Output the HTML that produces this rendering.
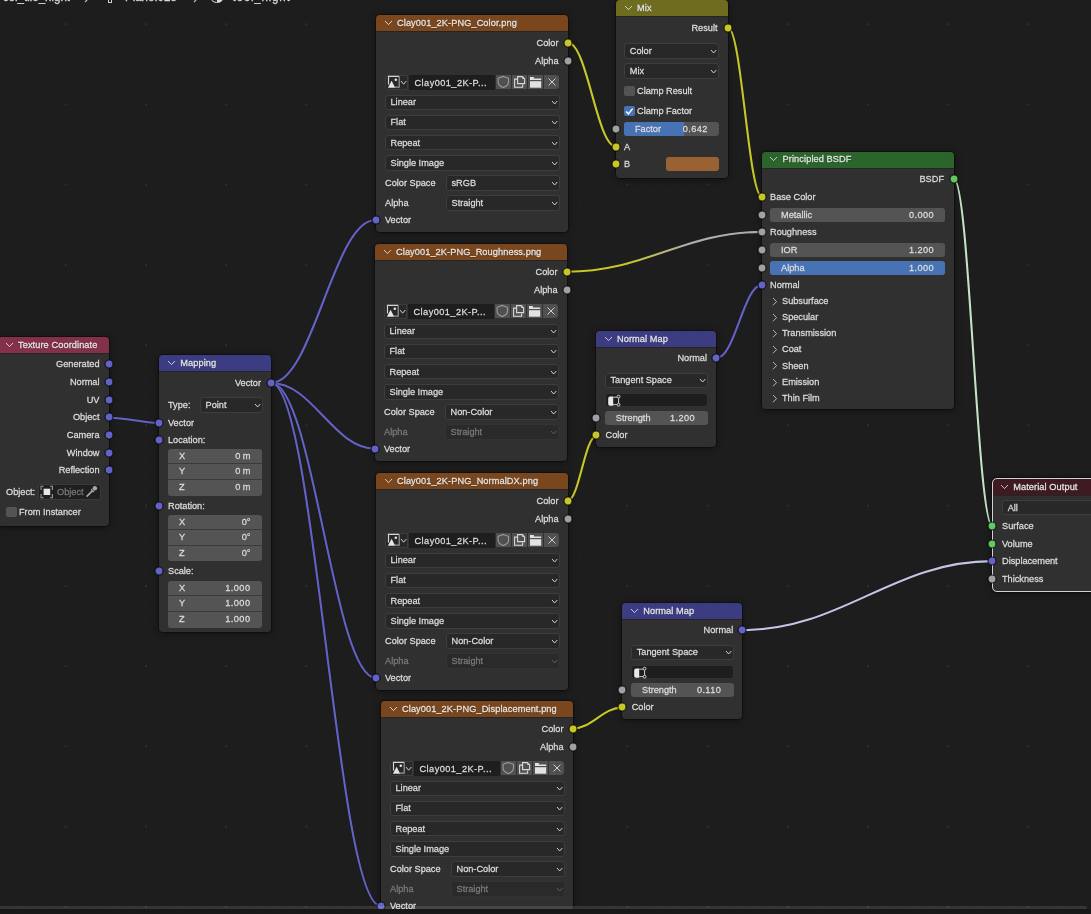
<!DOCTYPE html><html><head><meta charset="utf-8"><style>

*{margin:0;padding:0;box-sizing:border-box}
html,body{width:1091px;height:914px;overflow:hidden;background:#1d1d1d}
body{position:relative;font-family:"Liberation Sans",sans-serif}
#r{position:absolute;left:0;top:0;width:1091px;height:914px;will-change:transform}
#r>div,#r>svg{position:absolute}
.t{white-space:nowrap;font-size:9.2px;-webkit-text-stroke:0.25px currentColor;transform:scaleY(1.07)}
.node{background:#303030;border-radius:4px;overflow:hidden}
.hdr{position:absolute;left:0;top:0;right:0;box-shadow:0 0.8px 0 rgba(0,0,0,0.28)}
.sk{border-radius:50%;box-shadow:0 0 0 0.6px rgba(0,0,0,0.6)}
.dd{border:1px solid #3d3d3d;border-radius:3px}
.sl{border-radius:3px}
.cb{border-radius:2px}
.ic{overflow:visible}

</style></head><body><div id="r">
<svg style="left:0;top:0" width="1091" height="914"><defs><pattern id="gp" patternUnits="userSpaceOnUse" x="1.65" y="8.45" width="16.046" height="16.046"><rect x="-0.5" y="-0.5" width="1" height="1" fill="#2a2a2a"/><rect x="15.546" y="-0.5" width="1" height="1" fill="#2a2a2a"/><rect x="-0.5" y="15.546" width="1" height="1" fill="#2a2a2a"/><rect x="15.546" y="15.546" width="1" height="1" fill="#2a2a2a"/></pattern><pattern id="gp2" patternUnits="userSpaceOnUse" x="65.7" y="24.2" width="80.23" height="80.23"><circle cx="0" cy="0" r="0.9" fill="#333"/><circle cx="80.23" cy="0" r="0.9" fill="#333"/><circle cx="0" cy="80.23" r="0.9" fill="#333"/><circle cx="80.23" cy="80.23" r="0.9" fill="#333"/></pattern></defs><rect width="1091" height="914" fill="url(#gp)"/><rect width="1091" height="914" fill="url(#gp2)"/></svg>

<svg style="left:0;top:0" width="1091" height="914"><path d="M109.2 417.7 C129.24 417.7 139.26 422.8 159.3 422.8" fill="none" stroke="rgba(0,0,0,0.18)" stroke-width="3.1"/><path d="M109.2 417.7 C129.24 417.7 139.26 422.8 159.3 422.8" fill="none" stroke="#6363c7" stroke-width="2.1"/><path d="M271.2 383 C312.84000000000003 383 333.65999999999997 220 375.3 220" fill="none" stroke="rgba(0,0,0,0.18)" stroke-width="3.1"/><path d="M271.2 383 C312.84000000000003 383 333.65999999999997 220 375.3 220" fill="none" stroke="#6363c7" stroke-width="2.1"/><path d="M271.2 383 C312.64 383 333.36 448.6 374.8 448.6" fill="none" stroke="rgba(0,0,0,0.18)" stroke-width="3.1"/><path d="M271.2 383 C312.64 383 333.36 448.6 374.8 448.6" fill="none" stroke="#6363c7" stroke-width="2.1"/><path d="M271.2 383 C312.92 383 333.78 677.8 375.5 677.8" fill="none" stroke="rgba(0,0,0,0.18)" stroke-width="3.1"/><path d="M271.2 383 C312.92 383 333.78 677.8 375.5 677.8" fill="none" stroke="#6363c7" stroke-width="2.1"/><path d="M271.2 383 C314.92 383 336.78 905.8 380.5 905.8" fill="none" stroke="rgba(0,0,0,0.18)" stroke-width="3.1"/><path d="M271.2 383 C314.92 383 336.78 905.8 380.5 905.8" fill="none" stroke="#6363c7" stroke-width="2.1"/><path d="M568 42.8 C587.2 42.8 596.8 146.5 616 146.5" fill="none" stroke="rgba(0,0,0,0.18)" stroke-width="3.1"/><path d="M568 42.8 C587.2 42.8 596.8 146.5 616 146.5" fill="none" stroke="#c7c729" stroke-width="2.1"/><path d="M728 27.7 C741.6 27.7 748.4 196.7 762 196.7" fill="none" stroke="rgba(0,0,0,0.18)" stroke-width="3.1"/><path d="M728 27.7 C741.6 27.7 748.4 196.7 762 196.7" fill="none" stroke="#c7c729" stroke-width="2.1"/><defs><linearGradient id="g1" gradientUnits="userSpaceOnUse" x1="567" y1="271.8" x2="762" y2="231.9"><stop offset="0.3" stop-color="#c7c729"/><stop offset="0.62" stop-color="#acacac"/></linearGradient></defs><path d="M567 271.8 C645.0 271.8 684.0 231.9 762 231.9" fill="none" stroke="rgba(0,0,0,0.18)" stroke-width="3.1"/><path d="M567 271.8 C645.0 271.8 684.0 231.9 762 231.9" fill="none" stroke="url(#g1)" stroke-width="2.1"/><path d="M567.5 500.8 C579.1 500.8 584.9 435.7 596.5 435.7" fill="none" stroke="rgba(0,0,0,0.18)" stroke-width="3.1"/><path d="M567.5 500.8 C579.1 500.8 584.9 435.7 596.5 435.7" fill="none" stroke="#c7c729" stroke-width="2.1"/><path d="M716.5 358.3 C734.7 358.3 743.8 284.9 762 284.9" fill="none" stroke="rgba(0,0,0,0.18)" stroke-width="3.1"/><path d="M716.5 358.3 C734.7 358.3 743.8 284.9 762 284.9" fill="none" stroke="#6363c7" stroke-width="2.1"/><path d="M954 179.2 C969.4 179.2 977.1 526.2 992.5 526.2" fill="none" stroke="rgba(0,0,0,0.18)" stroke-width="3.1"/><path d="M954 179.2 C969.4 179.2 977.1 526.2 992.5 526.2" fill="none" stroke="#c4e2c4" stroke-width="2.1"/><path d="M572.5 728.5 C592.38 728.5 602.32 707.6 622.2 707.6" fill="none" stroke="rgba(0,0,0,0.18)" stroke-width="3.1"/><path d="M572.5 728.5 C592.38 728.5 602.32 707.6 622.2 707.6" fill="none" stroke="#c7c729" stroke-width="2.1"/><path d="M742.2 630.1 C842.32 630.1 892.38 561.1 992.5 561.1" fill="none" stroke="rgba(0,0,0,0.18)" stroke-width="3.1"/><path d="M742.2 630.1 C842.32 630.1 892.38 561.1 992.5 561.1" fill="none" stroke="#c4c4e4" stroke-width="2.1"/></svg>
<div class="t" style="right:1021px;top:-11.2px;line-height:16px;color:#d8d8d8;font-size:11.5px;text-align:right;">col_tile_night</div>
<div style="left:107.5px;top:-3px;width:4px;height:6px;border:1px solid #d0d0d0"></div>
<svg class="ic" style="left:84.0px;top:-7.5px" width="6" height="10"><path d="M1 1 L5 5.0 L1 9" fill="none" stroke="#bbbbbb" stroke-width="1.1"/></svg>
<div class="t" style="left:125px;top:-11.2px;line-height:16px;color:#d8d8d8;font-size:11.5px;">Plane.028</div>
<svg class="ic" style="left:193.0px;top:-7.5px" width="6" height="10"><path d="M1 1 L5 5.0 L1 9" fill="none" stroke="#bbbbbb" stroke-width="1.1"/></svg>
<div style="left:210px;top:-10.5px;width:13.5px;height:13.5px;border-radius:50%;border:1.2px solid #dcdcdc;background:linear-gradient(90deg,#2a2a2a 50%,#dcdcdc 50%)"></div>
<div class="t" style="left:232.5px;top:-11.2px;line-height:16px;color:#d8d8d8;font-size:11.5px;letter-spacing:0.8px">tool_night</div>
<div class="node" style="left:376px;top:15px;width:192px;height:217px;box-shadow:0 0 0 1px rgba(0,0,0,0.3), 0 1px 7px rgba(0,0,0,0.5);"><div class="hdr" style="height:16px;background:#79461d"></div></div>
<svg class="ic" style="left:383.5px;top:20.4px" width="9" height="5.6"><path d="M1 1 L4.5 4.6 L8 1" fill="none" stroke="rgba(255,255,255,0.72)" stroke-width="1.0"/></svg>
<div class="t" style="left:397px;top:15.0px;line-height:16px;color:#e4e4e4;font-size:9.2px;text-shadow:0 1px 1px rgba(0,0,0,0.35);letter-spacing:0.1px;">Clay001_2K-PNG_Color.png</div>
<div class="t" style="right:532.5px;top:34.8px;line-height:16px;color:#dcdcdc;font-size:9.2px;text-align:right;">Color</div>
<svg class="ic" style="left:562px;top:36.8px" width="12" height="12"><circle cx="6" cy="6" r="4.0" fill="#c7c729" stroke="rgba(0,0,0,0.75)" stroke-width="1.2"/></svg>
<div class="t" style="right:532.5px;top:52.9px;line-height:16px;color:#dcdcdc;font-size:9.2px;text-align:right;">Alpha</div>
<svg class="ic" style="left:562px;top:54.9px" width="12" height="12"><circle cx="6" cy="6" r="4.0" fill="#a1a1a1" stroke="rgba(0,0,0,0.75)" stroke-width="1.2"/></svg>
<div class="dd" style="left:385px;top:75px;width:23px;height:15px;background:#282828;border-color:#3d3d3d;border-top-right-radius:0;border-bottom-right-radius:0"></div>
<svg class="ic" style="left:387px;top:75px" width="14" height="14"><path d="M1.5 9.5 V1.4 H12.2" fill="none" stroke="#d6d6d6" stroke-width="1.2"/><path d="M12.2 1.4 V12.2 H8" fill="none" stroke="#9a9a9a" stroke-width="1.2"/><path d="M0.9 12.8 L4.6 5.8 L8.2 12.8 Z" fill="#e6e6e6"/><circle cx="8.8" cy="4.8" r="1.3" fill="#e6e6e6"/></svg>
<svg class="ic" style="left:399.85px;top:80.0px" width="7.3" height="5.2"><path d="M1 1 L3.65 4.2 L6.3 1" fill="none" stroke="#cfcfcf" stroke-width="1.0"/></svg>
<div style="left:409px;top:75px;width:86px;height:15px;background:#1e1e1e"></div>
<div class="t" style="left:414.5px;top:74.5px;line-height:16px;color:#dcdcdc;font-size:9.2px;letter-spacing:0.45px;">Clay001_2K-P...</div>
<div style="left:496px;top:75px;width:15px;height:14.2px;background:#505050;border-radius:0"></div>
<div style="left:512px;top:75px;width:15px;height:14.2px;background:#505050;border-radius:0"></div>
<div style="left:528px;top:75px;width:15px;height:14.2px;background:#505050;border-radius:0"></div>
<div style="left:544px;top:75px;width:15px;height:14.2px;background:#505050;border-radius:0 3px 3px 0"></div>
<svg class="ic" style="left:496px;top:75px" width="16" height="15"><path d="M7.3 1.4 L12.5 3.3 V7 C12.5 9.7 10.1 11.6 7.3 12.6 C4.5 11.6 2.1 9.7 2.1 7 V3.3 Z" fill="none" stroke="#9c9c9c" stroke-width="1.1"/></svg>
<svg class="ic" style="left:512px;top:75px" width="16" height="15"><path d="M5.6 1.6 H10.3 L12.6 3.9 V8.6 H5.6 Z" fill="none" stroke="#dadada" stroke-width="1.1"/><path d="M10.3 1.6 V3.9 H12.6 Z" fill="#dadada"/><path d="M5.0 4.1 H2.6 V12.3 H10.6 V9.6" fill="none" stroke="#dadada" stroke-width="1.1"/></svg>
<svg class="ic" style="left:528px;top:75px" width="16" height="15"><path d="M2 2 H5.8 V3.6 H13.2 V5 H2 Z" fill="#e2e2e2"/><rect x="2" y="6.2" width="11.2" height="6.5" fill="#e2e2e2"/></svg>
<svg class="ic" style="left:548px;top:78.2px" width="8" height="8"><path d="M0.5 0.5 L7.5 7.5 M7.5 0.5 L0.5 7.5" stroke="#d0d0d0" stroke-width="1"/></svg>
<div class="dd" style="left:384.5px;top:94.5px;width:175px;height:15.5px;background:#282828;border-color:#3d3d3d"></div>
<div class="t" style="left:390.5px;top:94.25px;line-height:16px;color:#dcdcdc;font-size:9.2px;">Linear</div>
<svg class="ic" style="left:550.65px;top:100.25px" width="7.3" height="5.0"><path d="M1 1 L3.65 4.0 L6.3 1" fill="none" stroke="#cfcfcf" stroke-width="1.0"/></svg>
<div class="dd" style="left:384.5px;top:114.7px;width:175px;height:15.5px;background:#282828;border-color:#3d3d3d"></div>
<div class="t" style="left:390.5px;top:114.45px;line-height:16px;color:#dcdcdc;font-size:9.2px;">Flat</div>
<svg class="ic" style="left:550.65px;top:120.45px" width="7.3" height="5.0"><path d="M1 1 L3.65 4.0 L6.3 1" fill="none" stroke="#cfcfcf" stroke-width="1.0"/></svg>
<div class="dd" style="left:384.5px;top:134.9px;width:175px;height:15.5px;background:#282828;border-color:#3d3d3d"></div>
<div class="t" style="left:390.5px;top:134.65px;line-height:16px;color:#dcdcdc;font-size:9.2px;">Repeat</div>
<svg class="ic" style="left:550.65px;top:140.65px" width="7.3" height="5.0"><path d="M1 1 L3.65 4.0 L6.3 1" fill="none" stroke="#cfcfcf" stroke-width="1.0"/></svg>
<div class="dd" style="left:384.5px;top:155.1px;width:175px;height:15.5px;background:#282828;border-color:#3d3d3d"></div>
<div class="t" style="left:390.5px;top:154.85px;line-height:16px;color:#dcdcdc;font-size:9.2px;">Single Image</div>
<svg class="ic" style="left:550.65px;top:160.85px" width="7.3" height="5.0"><path d="M1 1 L3.65 4.0 L6.3 1" fill="none" stroke="#cfcfcf" stroke-width="1.0"/></svg>
<div class="t" style="left:385px;top:174.6px;line-height:16px;color:#dcdcdc;font-size:9.2px;">Color Space</div>
<div class="dd" style="left:445.5px;top:175px;width:114.5px;height:15.5px;background:#282828;border-color:#3d3d3d"></div>
<div class="t" style="left:451.5px;top:174.75px;line-height:16px;color:#dcdcdc;font-size:9.2px;">sRGB</div>
<svg class="ic" style="left:551.15px;top:180.75px" width="7.3" height="5.0"><path d="M1 1 L3.65 4.0 L6.3 1" fill="none" stroke="#cfcfcf" stroke-width="1.0"/></svg>
<div class="t" style="left:385px;top:194.8px;line-height:16px;color:#dcdcdc;font-size:9.2px;">Alpha</div>
<div class="dd" style="left:445.5px;top:195.2px;width:114.5px;height:15.5px;background:#282828;border-color:#3d3d3d"></div>
<div class="t" style="left:451.5px;top:194.95px;line-height:16px;color:#dcdcdc;font-size:9.2px;">Straight</div>
<svg class="ic" style="left:551.15px;top:200.95px" width="7.3" height="5.0"><path d="M1 1 L3.65 4.0 L6.3 1" fill="none" stroke="#cfcfcf" stroke-width="1.0"/></svg>
<div class="t" style="left:385px;top:212.0px;line-height:16px;color:#dcdcdc;font-size:9.2px;">Vector</div>
<svg class="ic" style="left:370px;top:214px" width="12" height="12"><circle cx="6" cy="6" r="4.0" fill="#6363c7" stroke="rgba(0,0,0,0.75)" stroke-width="1.2"/></svg>
<div class="node" style="left:375px;top:244px;width:192px;height:216.5px;box-shadow:0 0 0 1px rgba(0,0,0,0.3), 0 1px 7px rgba(0,0,0,0.5);"><div class="hdr" style="height:16px;background:#79461d"></div></div>
<svg class="ic" style="left:382.5px;top:249.39999999999998px" width="9" height="5.6"><path d="M1 1 L4.5 4.6 L8 1" fill="none" stroke="rgba(255,255,255,0.72)" stroke-width="1.0"/></svg>
<div class="t" style="left:396px;top:244.0px;line-height:16px;color:#e4e4e4;font-size:9.2px;text-shadow:0 1px 1px rgba(0,0,0,0.35);letter-spacing:0.1px;">Clay001_2K-PNG_Roughness.png</div>
<div class="t" style="right:533.5px;top:263.8px;line-height:16px;color:#dcdcdc;font-size:9.2px;text-align:right;">Color</div>
<svg class="ic" style="left:561px;top:265.8px" width="12" height="12"><circle cx="6" cy="6" r="4.0" fill="#c7c729" stroke="rgba(0,0,0,0.75)" stroke-width="1.2"/></svg>
<div class="t" style="right:533.5px;top:281.9px;line-height:16px;color:#dcdcdc;font-size:9.2px;text-align:right;">Alpha</div>
<svg class="ic" style="left:561px;top:283.9px" width="12" height="12"><circle cx="6" cy="6" r="4.0" fill="#a1a1a1" stroke="rgba(0,0,0,0.75)" stroke-width="1.2"/></svg>
<div class="dd" style="left:384px;top:304px;width:23px;height:15px;background:#282828;border-color:#3d3d3d;border-top-right-radius:0;border-bottom-right-radius:0"></div>
<svg class="ic" style="left:386px;top:304px" width="14" height="14"><path d="M1.5 9.5 V1.4 H12.2" fill="none" stroke="#d6d6d6" stroke-width="1.2"/><path d="M12.2 1.4 V12.2 H8" fill="none" stroke="#9a9a9a" stroke-width="1.2"/><path d="M0.9 12.8 L4.6 5.8 L8.2 12.8 Z" fill="#e6e6e6"/><circle cx="8.8" cy="4.8" r="1.3" fill="#e6e6e6"/></svg>
<svg class="ic" style="left:398.85px;top:309.0px" width="7.3" height="5.2"><path d="M1 1 L3.65 4.2 L6.3 1" fill="none" stroke="#cfcfcf" stroke-width="1.0"/></svg>
<div style="left:408px;top:304px;width:86px;height:15px;background:#1e1e1e"></div>
<div class="t" style="left:413.5px;top:303.5px;line-height:16px;color:#dcdcdc;font-size:9.2px;letter-spacing:0.45px;">Clay001_2K-P...</div>
<div style="left:495px;top:304px;width:15px;height:14.2px;background:#505050;border-radius:0"></div>
<div style="left:511px;top:304px;width:15px;height:14.2px;background:#505050;border-radius:0"></div>
<div style="left:527px;top:304px;width:15px;height:14.2px;background:#505050;border-radius:0"></div>
<div style="left:543px;top:304px;width:15px;height:14.2px;background:#505050;border-radius:0 3px 3px 0"></div>
<svg class="ic" style="left:495px;top:304px" width="16" height="15"><path d="M7.3 1.4 L12.5 3.3 V7 C12.5 9.7 10.1 11.6 7.3 12.6 C4.5 11.6 2.1 9.7 2.1 7 V3.3 Z" fill="none" stroke="#9c9c9c" stroke-width="1.1"/></svg>
<svg class="ic" style="left:511px;top:304px" width="16" height="15"><path d="M5.6 1.6 H10.3 L12.6 3.9 V8.6 H5.6 Z" fill="none" stroke="#dadada" stroke-width="1.1"/><path d="M10.3 1.6 V3.9 H12.6 Z" fill="#dadada"/><path d="M5.0 4.1 H2.6 V12.3 H10.6 V9.6" fill="none" stroke="#dadada" stroke-width="1.1"/></svg>
<svg class="ic" style="left:527px;top:304px" width="16" height="15"><path d="M2 2 H5.8 V3.6 H13.2 V5 H2 Z" fill="#e2e2e2"/><rect x="2" y="6.2" width="11.2" height="6.5" fill="#e2e2e2"/></svg>
<svg class="ic" style="left:547px;top:307.2px" width="8" height="8"><path d="M0.5 0.5 L7.5 7.5 M7.5 0.5 L0.5 7.5" stroke="#d0d0d0" stroke-width="1"/></svg>
<div class="dd" style="left:383.5px;top:323.5px;width:175px;height:15.5px;background:#282828;border-color:#3d3d3d"></div>
<div class="t" style="left:389.5px;top:323.25px;line-height:16px;color:#dcdcdc;font-size:9.2px;">Linear</div>
<svg class="ic" style="left:549.65px;top:329.25px" width="7.3" height="5.0"><path d="M1 1 L3.65 4.0 L6.3 1" fill="none" stroke="#cfcfcf" stroke-width="1.0"/></svg>
<div class="dd" style="left:383.5px;top:343.7px;width:175px;height:15.5px;background:#282828;border-color:#3d3d3d"></div>
<div class="t" style="left:389.5px;top:343.45px;line-height:16px;color:#dcdcdc;font-size:9.2px;">Flat</div>
<svg class="ic" style="left:549.65px;top:349.45px" width="7.3" height="5.0"><path d="M1 1 L3.65 4.0 L6.3 1" fill="none" stroke="#cfcfcf" stroke-width="1.0"/></svg>
<div class="dd" style="left:383.5px;top:363.9px;width:175px;height:15.5px;background:#282828;border-color:#3d3d3d"></div>
<div class="t" style="left:389.5px;top:363.65px;line-height:16px;color:#dcdcdc;font-size:9.2px;">Repeat</div>
<svg class="ic" style="left:549.65px;top:369.65px" width="7.3" height="5.0"><path d="M1 1 L3.65 4.0 L6.3 1" fill="none" stroke="#cfcfcf" stroke-width="1.0"/></svg>
<div class="dd" style="left:383.5px;top:384.1px;width:175px;height:15.5px;background:#282828;border-color:#3d3d3d"></div>
<div class="t" style="left:389.5px;top:383.85px;line-height:16px;color:#dcdcdc;font-size:9.2px;">Single Image</div>
<svg class="ic" style="left:549.65px;top:389.85px" width="7.3" height="5.0"><path d="M1 1 L3.65 4.0 L6.3 1" fill="none" stroke="#cfcfcf" stroke-width="1.0"/></svg>
<div class="t" style="left:384px;top:403.6px;line-height:16px;color:#dcdcdc;font-size:9.2px;">Color Space</div>
<div class="dd" style="left:444.5px;top:404px;width:114.5px;height:15.5px;background:#282828;border-color:#3d3d3d"></div>
<div class="t" style="left:450.5px;top:403.75px;line-height:16px;color:#dcdcdc;font-size:9.2px;">Non-Color</div>
<svg class="ic" style="left:550.15px;top:409.75px" width="7.3" height="5.0"><path d="M1 1 L3.65 4.0 L6.3 1" fill="none" stroke="#cfcfcf" stroke-width="1.0"/></svg>
<div class="t" style="left:384px;top:423.8px;line-height:16px;color:#7a7a7a;font-size:9.2px;">Alpha</div>
<div class="dd" style="left:444.5px;top:424.2px;width:114.5px;height:15.5px;background:#2a2a2a;border-color:#333333"></div>
<div class="t" style="left:450.5px;top:423.95px;line-height:16px;color:#7a7a7a;font-size:9.2px;">Straight</div>
<svg class="ic" style="left:550.15px;top:429.95px" width="7.3" height="5.0"><path d="M1 1 L3.65 4.0 L6.3 1" fill="none" stroke="#5f5f5f" stroke-width="1.0"/></svg>
<div class="t" style="left:384px;top:441.0px;line-height:16px;color:#dcdcdc;font-size:9.2px;">Vector</div>
<svg class="ic" style="left:369px;top:443px" width="12" height="12"><circle cx="6" cy="6" r="4.0" fill="#6363c7" stroke="rgba(0,0,0,0.75)" stroke-width="1.2"/></svg>
<div class="node" style="left:376px;top:473px;width:192px;height:216.5px;box-shadow:0 0 0 1px rgba(0,0,0,0.3), 0 1px 7px rgba(0,0,0,0.5);"><div class="hdr" style="height:16px;background:#79461d"></div></div>
<svg class="ic" style="left:383.5px;top:478.4px" width="9" height="5.6"><path d="M1 1 L4.5 4.6 L8 1" fill="none" stroke="rgba(255,255,255,0.72)" stroke-width="1.0"/></svg>
<div class="t" style="left:397px;top:473.0px;line-height:16px;color:#e4e4e4;font-size:9.2px;text-shadow:0 1px 1px rgba(0,0,0,0.35);letter-spacing:0.1px;">Clay001_2K-PNG_NormalDX.png</div>
<div class="t" style="right:532.5px;top:492.8px;line-height:16px;color:#dcdcdc;font-size:9.2px;text-align:right;">Color</div>
<svg class="ic" style="left:562px;top:494.8px" width="12" height="12"><circle cx="6" cy="6" r="4.0" fill="#c7c729" stroke="rgba(0,0,0,0.75)" stroke-width="1.2"/></svg>
<div class="t" style="right:532.5px;top:510.9px;line-height:16px;color:#dcdcdc;font-size:9.2px;text-align:right;">Alpha</div>
<svg class="ic" style="left:562px;top:512.9px" width="12" height="12"><circle cx="6" cy="6" r="4.0" fill="#a1a1a1" stroke="rgba(0,0,0,0.75)" stroke-width="1.2"/></svg>
<div class="dd" style="left:385px;top:533px;width:23px;height:15px;background:#282828;border-color:#3d3d3d;border-top-right-radius:0;border-bottom-right-radius:0"></div>
<svg class="ic" style="left:387px;top:533px" width="14" height="14"><path d="M1.5 9.5 V1.4 H12.2" fill="none" stroke="#d6d6d6" stroke-width="1.2"/><path d="M12.2 1.4 V12.2 H8" fill="none" stroke="#9a9a9a" stroke-width="1.2"/><path d="M0.9 12.8 L4.6 5.8 L8.2 12.8 Z" fill="#e6e6e6"/><circle cx="8.8" cy="4.8" r="1.3" fill="#e6e6e6"/></svg>
<svg class="ic" style="left:399.85px;top:538.0px" width="7.3" height="5.2"><path d="M1 1 L3.65 4.2 L6.3 1" fill="none" stroke="#cfcfcf" stroke-width="1.0"/></svg>
<div style="left:409px;top:533px;width:86px;height:15px;background:#1e1e1e"></div>
<div class="t" style="left:414.5px;top:532.5px;line-height:16px;color:#dcdcdc;font-size:9.2px;letter-spacing:0.45px;">Clay001_2K-P...</div>
<div style="left:496px;top:533px;width:15px;height:14.2px;background:#505050;border-radius:0"></div>
<div style="left:512px;top:533px;width:15px;height:14.2px;background:#505050;border-radius:0"></div>
<div style="left:528px;top:533px;width:15px;height:14.2px;background:#505050;border-radius:0"></div>
<div style="left:544px;top:533px;width:15px;height:14.2px;background:#505050;border-radius:0 3px 3px 0"></div>
<svg class="ic" style="left:496px;top:533px" width="16" height="15"><path d="M7.3 1.4 L12.5 3.3 V7 C12.5 9.7 10.1 11.6 7.3 12.6 C4.5 11.6 2.1 9.7 2.1 7 V3.3 Z" fill="none" stroke="#9c9c9c" stroke-width="1.1"/></svg>
<svg class="ic" style="left:512px;top:533px" width="16" height="15"><path d="M5.6 1.6 H10.3 L12.6 3.9 V8.6 H5.6 Z" fill="none" stroke="#dadada" stroke-width="1.1"/><path d="M10.3 1.6 V3.9 H12.6 Z" fill="#dadada"/><path d="M5.0 4.1 H2.6 V12.3 H10.6 V9.6" fill="none" stroke="#dadada" stroke-width="1.1"/></svg>
<svg class="ic" style="left:528px;top:533px" width="16" height="15"><path d="M2 2 H5.8 V3.6 H13.2 V5 H2 Z" fill="#e2e2e2"/><rect x="2" y="6.2" width="11.2" height="6.5" fill="#e2e2e2"/></svg>
<svg class="ic" style="left:548px;top:536.2px" width="8" height="8"><path d="M0.5 0.5 L7.5 7.5 M7.5 0.5 L0.5 7.5" stroke="#d0d0d0" stroke-width="1"/></svg>
<div class="dd" style="left:384.5px;top:552.5px;width:175px;height:15.5px;background:#282828;border-color:#3d3d3d"></div>
<div class="t" style="left:390.5px;top:552.25px;line-height:16px;color:#dcdcdc;font-size:9.2px;">Linear</div>
<svg class="ic" style="left:550.65px;top:558.25px" width="7.3" height="5.0"><path d="M1 1 L3.65 4.0 L6.3 1" fill="none" stroke="#cfcfcf" stroke-width="1.0"/></svg>
<div class="dd" style="left:384.5px;top:572.7px;width:175px;height:15.5px;background:#282828;border-color:#3d3d3d"></div>
<div class="t" style="left:390.5px;top:572.45px;line-height:16px;color:#dcdcdc;font-size:9.2px;">Flat</div>
<svg class="ic" style="left:550.65px;top:578.45px" width="7.3" height="5.0"><path d="M1 1 L3.65 4.0 L6.3 1" fill="none" stroke="#cfcfcf" stroke-width="1.0"/></svg>
<div class="dd" style="left:384.5px;top:592.9px;width:175px;height:15.5px;background:#282828;border-color:#3d3d3d"></div>
<div class="t" style="left:390.5px;top:592.65px;line-height:16px;color:#dcdcdc;font-size:9.2px;">Repeat</div>
<svg class="ic" style="left:550.65px;top:598.65px" width="7.3" height="5.0"><path d="M1 1 L3.65 4.0 L6.3 1" fill="none" stroke="#cfcfcf" stroke-width="1.0"/></svg>
<div class="dd" style="left:384.5px;top:613.1px;width:175px;height:15.5px;background:#282828;border-color:#3d3d3d"></div>
<div class="t" style="left:390.5px;top:612.85px;line-height:16px;color:#dcdcdc;font-size:9.2px;">Single Image</div>
<svg class="ic" style="left:550.65px;top:618.85px" width="7.3" height="5.0"><path d="M1 1 L3.65 4.0 L6.3 1" fill="none" stroke="#cfcfcf" stroke-width="1.0"/></svg>
<div class="t" style="left:385px;top:632.6px;line-height:16px;color:#dcdcdc;font-size:9.2px;">Color Space</div>
<div class="dd" style="left:445.5px;top:633px;width:114.5px;height:15.5px;background:#282828;border-color:#3d3d3d"></div>
<div class="t" style="left:451.5px;top:632.75px;line-height:16px;color:#dcdcdc;font-size:9.2px;">Non-Color</div>
<svg class="ic" style="left:551.15px;top:638.75px" width="7.3" height="5.0"><path d="M1 1 L3.65 4.0 L6.3 1" fill="none" stroke="#cfcfcf" stroke-width="1.0"/></svg>
<div class="t" style="left:385px;top:652.8px;line-height:16px;color:#7a7a7a;font-size:9.2px;">Alpha</div>
<div class="dd" style="left:445.5px;top:653.2px;width:114.5px;height:15.5px;background:#2a2a2a;border-color:#333333"></div>
<div class="t" style="left:451.5px;top:652.95px;line-height:16px;color:#7a7a7a;font-size:9.2px;">Straight</div>
<svg class="ic" style="left:551.15px;top:658.95px" width="7.3" height="5.0"><path d="M1 1 L3.65 4.0 L6.3 1" fill="none" stroke="#5f5f5f" stroke-width="1.0"/></svg>
<div class="t" style="left:385px;top:670.0px;line-height:16px;color:#dcdcdc;font-size:9.2px;">Vector</div>
<svg class="ic" style="left:370px;top:672px" width="12" height="12"><circle cx="6" cy="6" r="4.0" fill="#6363c7" stroke="rgba(0,0,0,0.75)" stroke-width="1.2"/></svg>
<div class="node" style="left:381px;top:701px;width:192px;height:216.5px;box-shadow:0 0 0 1px rgba(0,0,0,0.3), 0 1px 7px rgba(0,0,0,0.5);"><div class="hdr" style="height:16px;background:#79461d"></div></div>
<svg class="ic" style="left:388.5px;top:706.4000000000001px" width="9" height="5.6"><path d="M1 1 L4.5 4.6 L8 1" fill="none" stroke="rgba(255,255,255,0.72)" stroke-width="1.0"/></svg>
<div class="t" style="left:402px;top:701.0px;line-height:16px;color:#e4e4e4;font-size:9.2px;text-shadow:0 1px 1px rgba(0,0,0,0.35);letter-spacing:0.1px;">Clay001_2K-PNG_Displacement.png</div>
<div class="t" style="right:527.5px;top:720.8px;line-height:16px;color:#dcdcdc;font-size:9.2px;text-align:right;">Color</div>
<svg class="ic" style="left:567px;top:722.8px" width="12" height="12"><circle cx="6" cy="6" r="4.0" fill="#c7c729" stroke="rgba(0,0,0,0.75)" stroke-width="1.2"/></svg>
<div class="t" style="right:527.5px;top:738.9px;line-height:16px;color:#dcdcdc;font-size:9.2px;text-align:right;">Alpha</div>
<svg class="ic" style="left:567px;top:740.9px" width="12" height="12"><circle cx="6" cy="6" r="4.0" fill="#a1a1a1" stroke="rgba(0,0,0,0.75)" stroke-width="1.2"/></svg>
<div class="dd" style="left:390px;top:761px;width:23px;height:15px;background:#282828;border-color:#3d3d3d;border-top-right-radius:0;border-bottom-right-radius:0"></div>
<svg class="ic" style="left:392px;top:761px" width="14" height="14"><path d="M1.5 9.5 V1.4 H12.2" fill="none" stroke="#d6d6d6" stroke-width="1.2"/><path d="M12.2 1.4 V12.2 H8" fill="none" stroke="#9a9a9a" stroke-width="1.2"/><path d="M0.9 12.8 L4.6 5.8 L8.2 12.8 Z" fill="#e6e6e6"/><circle cx="8.8" cy="4.8" r="1.3" fill="#e6e6e6"/></svg>
<svg class="ic" style="left:404.85px;top:766.0px" width="7.3" height="5.2"><path d="M1 1 L3.65 4.2 L6.3 1" fill="none" stroke="#cfcfcf" stroke-width="1.0"/></svg>
<div style="left:414px;top:761px;width:86px;height:15px;background:#1e1e1e"></div>
<div class="t" style="left:419.5px;top:760.5px;line-height:16px;color:#dcdcdc;font-size:9.2px;letter-spacing:0.45px;">Clay001_2K-P...</div>
<div style="left:501px;top:761px;width:15px;height:14.2px;background:#505050;border-radius:0"></div>
<div style="left:517px;top:761px;width:15px;height:14.2px;background:#505050;border-radius:0"></div>
<div style="left:533px;top:761px;width:15px;height:14.2px;background:#505050;border-radius:0"></div>
<div style="left:549px;top:761px;width:15px;height:14.2px;background:#505050;border-radius:0 3px 3px 0"></div>
<svg class="ic" style="left:501px;top:761px" width="16" height="15"><path d="M7.3 1.4 L12.5 3.3 V7 C12.5 9.7 10.1 11.6 7.3 12.6 C4.5 11.6 2.1 9.7 2.1 7 V3.3 Z" fill="none" stroke="#9c9c9c" stroke-width="1.1"/></svg>
<svg class="ic" style="left:517px;top:761px" width="16" height="15"><path d="M5.6 1.6 H10.3 L12.6 3.9 V8.6 H5.6 Z" fill="none" stroke="#dadada" stroke-width="1.1"/><path d="M10.3 1.6 V3.9 H12.6 Z" fill="#dadada"/><path d="M5.0 4.1 H2.6 V12.3 H10.6 V9.6" fill="none" stroke="#dadada" stroke-width="1.1"/></svg>
<svg class="ic" style="left:533px;top:761px" width="16" height="15"><path d="M2 2 H5.8 V3.6 H13.2 V5 H2 Z" fill="#e2e2e2"/><rect x="2" y="6.2" width="11.2" height="6.5" fill="#e2e2e2"/></svg>
<svg class="ic" style="left:553px;top:764.2px" width="8" height="8"><path d="M0.5 0.5 L7.5 7.5 M7.5 0.5 L0.5 7.5" stroke="#d0d0d0" stroke-width="1"/></svg>
<div class="dd" style="left:389.5px;top:780.5px;width:175px;height:15.5px;background:#282828;border-color:#3d3d3d"></div>
<div class="t" style="left:395.5px;top:780.25px;line-height:16px;color:#dcdcdc;font-size:9.2px;">Linear</div>
<svg class="ic" style="left:555.65px;top:786.25px" width="7.3" height="5.0"><path d="M1 1 L3.65 4.0 L6.3 1" fill="none" stroke="#cfcfcf" stroke-width="1.0"/></svg>
<div class="dd" style="left:389.5px;top:800.7px;width:175px;height:15.5px;background:#282828;border-color:#3d3d3d"></div>
<div class="t" style="left:395.5px;top:800.45px;line-height:16px;color:#dcdcdc;font-size:9.2px;">Flat</div>
<svg class="ic" style="left:555.65px;top:806.45px" width="7.3" height="5.0"><path d="M1 1 L3.65 4.0 L6.3 1" fill="none" stroke="#cfcfcf" stroke-width="1.0"/></svg>
<div class="dd" style="left:389.5px;top:820.9px;width:175px;height:15.5px;background:#282828;border-color:#3d3d3d"></div>
<div class="t" style="left:395.5px;top:820.65px;line-height:16px;color:#dcdcdc;font-size:9.2px;">Repeat</div>
<svg class="ic" style="left:555.65px;top:826.65px" width="7.3" height="5.0"><path d="M1 1 L3.65 4.0 L6.3 1" fill="none" stroke="#cfcfcf" stroke-width="1.0"/></svg>
<div class="dd" style="left:389.5px;top:841.1px;width:175px;height:15.5px;background:#282828;border-color:#3d3d3d"></div>
<div class="t" style="left:395.5px;top:840.85px;line-height:16px;color:#dcdcdc;font-size:9.2px;">Single Image</div>
<svg class="ic" style="left:555.65px;top:846.85px" width="7.3" height="5.0"><path d="M1 1 L3.65 4.0 L6.3 1" fill="none" stroke="#cfcfcf" stroke-width="1.0"/></svg>
<div class="t" style="left:390px;top:860.6px;line-height:16px;color:#dcdcdc;font-size:9.2px;">Color Space</div>
<div class="dd" style="left:450.5px;top:861px;width:114.5px;height:15.5px;background:#282828;border-color:#3d3d3d"></div>
<div class="t" style="left:456.5px;top:860.75px;line-height:16px;color:#dcdcdc;font-size:9.2px;">Non-Color</div>
<svg class="ic" style="left:556.15px;top:866.75px" width="7.3" height="5.0"><path d="M1 1 L3.65 4.0 L6.3 1" fill="none" stroke="#cfcfcf" stroke-width="1.0"/></svg>
<div class="t" style="left:390px;top:880.8px;line-height:16px;color:#7a7a7a;font-size:9.2px;">Alpha</div>
<div class="dd" style="left:450.5px;top:881.2px;width:114.5px;height:15.5px;background:#2a2a2a;border-color:#333333"></div>
<div class="t" style="left:456.5px;top:880.95px;line-height:16px;color:#7a7a7a;font-size:9.2px;">Straight</div>
<svg class="ic" style="left:556.15px;top:886.95px" width="7.3" height="5.0"><path d="M1 1 L3.65 4.0 L6.3 1" fill="none" stroke="#5f5f5f" stroke-width="1.0"/></svg>
<div class="t" style="left:390px;top:898.0px;line-height:16px;color:#dcdcdc;font-size:9.2px;">Vector</div>
<svg class="ic" style="left:375px;top:900px" width="12" height="12"><circle cx="6" cy="6" r="4.0" fill="#6363c7" stroke="rgba(0,0,0,0.75)" stroke-width="1.2"/></svg>
<div class="node" style="left:616px;top:-0.5px;width:112px;height:178.2px;box-shadow:0 0 0 1px rgba(0,0,0,0.3), 0 1px 7px rgba(0,0,0,0.5);"><div class="hdr" style="height:16px;background:#6d6c1f"></div></div>
<svg class="ic" style="left:623.5px;top:4.9px" width="9" height="5.6"><path d="M1 1 L4.5 4.6 L8 1" fill="none" stroke="rgba(255,255,255,0.72)" stroke-width="1.0"/></svg>
<div class="t" style="left:637px;top:-0.5px;line-height:16px;color:#e4e4e4;font-size:9.2px;text-shadow:0 1px 1px rgba(0,0,0,0.35);letter-spacing:0.1px;">Mix</div>
<div class="t" style="right:373.5px;top:19.7px;line-height:16px;color:#dcdcdc;font-size:9.2px;text-align:right;">Result</div>
<svg class="ic" style="left:722px;top:21.7px" width="12" height="12"><circle cx="6" cy="6" r="4.0" fill="#c7c729" stroke="rgba(0,0,0,0.75)" stroke-width="1.2"/></svg>
<div class="dd" style="left:623.8px;top:43px;width:95.5px;height:15.5px;background:#282828;border-color:#3d3d3d"></div>
<div class="t" style="left:629.8px;top:42.75px;line-height:16px;color:#dcdcdc;font-size:9.2px;">Color</div>
<svg class="ic" style="left:710.4499999999999px;top:48.75px" width="7.3" height="5.0"><path d="M1 1 L3.65 4.0 L6.3 1" fill="none" stroke="#cfcfcf" stroke-width="1.0"/></svg>
<div class="dd" style="left:623.8px;top:63.3px;width:95.5px;height:15.5px;background:#282828;border-color:#3d3d3d"></div>
<div class="t" style="left:629.8px;top:63.05px;line-height:16px;color:#dcdcdc;font-size:9.2px;">Mix</div>
<svg class="ic" style="left:710.4499999999999px;top:69.05px" width="7.3" height="5.0"><path d="M1 1 L3.65 4.0 L6.3 1" fill="none" stroke="#cfcfcf" stroke-width="1.0"/></svg>
<div class="cb" style="left:624px;top:85.6px;width:10.5px;height:10.5px;background:#545454"></div>
<div class="t" style="left:637px;top:82.8px;line-height:16px;color:#dcdcdc;font-size:9.2px;">Clamp Result</div>
<div class="cb" style="left:624px;top:105.6px;width:10.5px;height:10.5px;background:#4772b3"></div>
<svg class="ic" style="left:624px;top:105.6px" width="10.5" height="10.5"><path d="M2.1 5.46 L4.41 7.875 L8.61 2.625" fill="none" stroke="#ffffff" stroke-width="1.5"/></svg>
<div class="t" style="left:637px;top:102.8px;line-height:16px;color:#dcdcdc;font-size:9.2px;">Clamp Factor</div>
<div class="sl" style="left:624px;top:122.2px;width:95.3px;height:14px;background:#545454"></div>
<div class="sl" style="left:624px;top:122.2px;width:59.6578px;height:14px;background:#4772b3;border-top-right-radius:0px;border-bottom-right-radius:0px"></div>
<div class="t" style="left:635px;top:121.19999999999999px;line-height:16px;color:#dcdcdc;font-size:9.2px;">Factor</div>
<div class="t" style="right:383.20000000000005px;top:121.19999999999999px;line-height:16px;color:#dcdcdc;font-size:9.2px;text-align:right;letter-spacing:0.4px;">0.642</div>
<svg class="ic" style="left:610px;top:122.80000000000001px" width="12" height="12"><circle cx="6" cy="6" r="4.0" fill="#a1a1a1" stroke="rgba(0,0,0,0.75)" stroke-width="1.2"/></svg>
<div class="t" style="left:624px;top:138.5px;line-height:16px;color:#dcdcdc;font-size:9.2px;">A</div>
<svg class="ic" style="left:610px;top:140.5px" width="12" height="12"><circle cx="6" cy="6" r="4.0" fill="#c7c729" stroke="rgba(0,0,0,0.75)" stroke-width="1.2"/></svg>
<div class="t" style="left:624px;top:156.2px;line-height:16px;color:#dcdcdc;font-size:9.2px;">B</div>
<svg class="ic" style="left:610px;top:158.2px" width="12" height="12"><circle cx="6" cy="6" r="4.0" fill="#c7c729" stroke="rgba(0,0,0,0.75)" stroke-width="1.2"/></svg>
<div style="left:666px;top:157px;width:53px;height:14px;border-radius:3px;background:#9a6233"></div>
<div class="node" style="left:761.6px;top:152px;width:192px;height:257.3px;box-shadow:0 0 0 1px rgba(0,0,0,0.3), 0 1px 7px rgba(0,0,0,0.5);"><div class="hdr" style="height:16px;background:#2b652b"></div></div>
<svg class="ic" style="left:769.1px;top:155.99999999999997px" width="9" height="5.6"><path d="M1 1 L4.5 4.6 L8 1" fill="none" stroke="rgba(255,255,255,0.72)" stroke-width="1.0"/></svg>
<div class="t" style="left:782.6px;top:150.6px;line-height:16px;color:#e4e4e4;font-size:9.2px;text-shadow:0 1px 1px rgba(0,0,0,0.35);letter-spacing:0.1px;">Principled BSDF</div>
<div class="t" style="right:147px;top:170.9px;line-height:16px;color:#dcdcdc;font-size:9.2px;text-align:right;">BSDF</div>
<svg class="ic" style="left:948px;top:172.9px" width="12" height="12"><circle cx="6" cy="6" r="4.0" fill="#63c763" stroke="rgba(0,0,0,0.75)" stroke-width="1.2"/></svg>
<div class="t" style="left:770px;top:188.7px;line-height:16px;color:#dcdcdc;font-size:9.2px;">Base Color</div>
<svg class="ic" style="left:755.6px;top:190.7px" width="12" height="12"><circle cx="6" cy="6" r="4.0" fill="#c7c729" stroke="rgba(0,0,0,0.75)" stroke-width="1.2"/></svg>
<div class="sl" style="left:770px;top:208px;width:175px;height:14px;background:#545454"></div>
<div class="t" style="left:781px;top:207.0px;line-height:16px;color:#dcdcdc;font-size:9.2px;">Metallic</div>
<div class="t" style="right:157px;top:207.0px;line-height:16px;color:#dcdcdc;font-size:9.2px;text-align:right;letter-spacing:0.4px;">0.000</div>
<svg class="ic" style="left:755.6px;top:208.5px" width="12" height="12"><circle cx="6" cy="6" r="4.0" fill="#a1a1a1" stroke="rgba(0,0,0,0.75)" stroke-width="1.2"/></svg>
<div class="t" style="left:770px;top:223.9px;line-height:16px;color:#dcdcdc;font-size:9.2px;">Roughness</div>
<svg class="ic" style="left:755.6px;top:225.9px" width="12" height="12"><circle cx="6" cy="6" r="4.0" fill="#a1a1a1" stroke="rgba(0,0,0,0.75)" stroke-width="1.2"/></svg>
<div class="sl" style="left:770px;top:242.6px;width:175px;height:14.2px;background:#545454"></div>
<div class="t" style="left:781px;top:241.7px;line-height:16px;color:#dcdcdc;font-size:9.2px;">IOR</div>
<div class="t" style="right:157px;top:241.7px;line-height:16px;color:#dcdcdc;font-size:9.2px;text-align:right;letter-spacing:0.4px;">1.200</div>
<svg class="ic" style="left:755.6px;top:243.7px" width="12" height="12"><circle cx="6" cy="6" r="4.0" fill="#a1a1a1" stroke="rgba(0,0,0,0.75)" stroke-width="1.2"/></svg>
<div class="sl" style="left:770px;top:261px;width:175px;height:14px;background:#545454"></div>
<div class="sl" style="left:770px;top:261px;width:175.0px;height:14px;background:#4772b3;border-top-right-radius:3px;border-bottom-right-radius:3px"></div>
<div class="t" style="left:781px;top:260.0px;line-height:16px;color:#dcdcdc;font-size:9.2px;">Alpha</div>
<div class="t" style="right:157px;top:260.0px;line-height:16px;color:#dcdcdc;font-size:9.2px;text-align:right;letter-spacing:0.4px;">1.000</div>
<svg class="ic" style="left:755.6px;top:261.5px" width="12" height="12"><circle cx="6" cy="6" r="4.0" fill="#a1a1a1" stroke="rgba(0,0,0,0.75)" stroke-width="1.2"/></svg>
<div class="t" style="left:770px;top:276.9px;line-height:16px;color:#dcdcdc;font-size:9.2px;">Normal</div>
<svg class="ic" style="left:755.6px;top:278.9px" width="12" height="12"><circle cx="6" cy="6" r="4.0" fill="#6363c7" stroke="rgba(0,0,0,0.75)" stroke-width="1.2"/></svg>
<svg class="ic" style="left:772.4000000000001px;top:296.59999999999997px" width="5.6" height="9.2"><path d="M1 1 L4.6 4.6 L1 8.2" fill="none" stroke="#b8b8b8" stroke-width="1.0"/></svg>
<div class="t" style="left:782px;top:292.9px;line-height:16px;color:#dcdcdc;font-size:9.2px;">Subsurface</div>
<svg class="ic" style="left:772.4000000000001px;top:312.78px" width="5.6" height="9.2"><path d="M1 1 L4.6 4.6 L1 8.2" fill="none" stroke="#b8b8b8" stroke-width="1.0"/></svg>
<div class="t" style="left:782px;top:309.08px;line-height:16px;color:#dcdcdc;font-size:9.2px;">Specular</div>
<svg class="ic" style="left:772.4000000000001px;top:328.96px" width="5.6" height="9.2"><path d="M1 1 L4.6 4.6 L1 8.2" fill="none" stroke="#b8b8b8" stroke-width="1.0"/></svg>
<div class="t" style="left:782px;top:325.26px;line-height:16px;color:#dcdcdc;font-size:9.2px;">Transmission</div>
<svg class="ic" style="left:772.4000000000001px;top:345.14px" width="5.6" height="9.2"><path d="M1 1 L4.6 4.6 L1 8.2" fill="none" stroke="#b8b8b8" stroke-width="1.0"/></svg>
<div class="t" style="left:782px;top:341.44px;line-height:16px;color:#dcdcdc;font-size:9.2px;">Coat</div>
<svg class="ic" style="left:772.4000000000001px;top:361.32px" width="5.6" height="9.2"><path d="M1 1 L4.6 4.6 L1 8.2" fill="none" stroke="#b8b8b8" stroke-width="1.0"/></svg>
<div class="t" style="left:782px;top:357.62px;line-height:16px;color:#dcdcdc;font-size:9.2px;">Sheen</div>
<svg class="ic" style="left:772.4000000000001px;top:377.49999999999994px" width="5.6" height="9.2"><path d="M1 1 L4.6 4.6 L1 8.2" fill="none" stroke="#b8b8b8" stroke-width="1.0"/></svg>
<div class="t" style="left:782px;top:373.79999999999995px;line-height:16px;color:#dcdcdc;font-size:9.2px;">Emission</div>
<svg class="ic" style="left:772.4000000000001px;top:393.67999999999995px" width="5.6" height="9.2"><path d="M1 1 L4.6 4.6 L1 8.2" fill="none" stroke="#b8b8b8" stroke-width="1.0"/></svg>
<div class="t" style="left:782px;top:389.97999999999996px;line-height:16px;color:#dcdcdc;font-size:9.2px;">Thin Film</div>
<div class="node" style="left:596px;top:330.5px;width:120px;height:116.5px;box-shadow:0 0 0 1px rgba(0,0,0,0.3), 0 1px 7px rgba(0,0,0,0.5);"><div class="hdr" style="height:16px;background:#3c3c83"></div></div>
<svg class="ic" style="left:603.5px;top:335.9px" width="9" height="5.6"><path d="M1 1 L4.5 4.6 L8 1" fill="none" stroke="rgba(255,255,255,0.72)" stroke-width="1.0"/></svg>
<div class="t" style="left:617px;top:330.5px;line-height:16px;color:#e4e4e4;font-size:9.2px;text-shadow:0 1px 1px rgba(0,0,0,0.35);letter-spacing:0.1px;">Normal Map</div>
<div class="t" style="right:384px;top:350.1px;line-height:16px;color:#dcdcdc;font-size:9.2px;text-align:right;">Normal</div>
<svg class="ic" style="left:710px;top:352.1px" width="12" height="12"><circle cx="6" cy="6" r="4.0" fill="#6363c7" stroke="rgba(0,0,0,0.75)" stroke-width="1.2"/></svg>
<div class="dd" style="left:604.5px;top:372.5px;width:103px;height:15px;background:#282828;border-color:#3d3d3d"></div>
<div class="t" style="left:610.5px;top:372.0px;line-height:16px;color:#dcdcdc;font-size:9.2px;">Tangent Space</div>
<svg class="ic" style="left:698.65px;top:378.0px" width="7.3" height="5.0"><path d="M1 1 L3.65 4.0 L6.3 1" fill="none" stroke="#cfcfcf" stroke-width="1.0"/></svg>
<div class="dd" style="left:604.5px;top:392.5px;width:103px;height:14.5px;background:#1e1e1e;border-color:#333"></div>
<svg class="ic" style="left:607px;top:393.0px" width="14" height="14"><path d="M3 3.6 H6.2 V12.8 H3 Q1.2 12.8 1.2 11 V5.4 Q1.2 3.6 3 3.6 Z" fill="#e8e8e8"/><path d="M6.2 4.2 H10.2 M6.2 11.6 H10.2 M11.6 5 V10.3" stroke="#e0e0e0" stroke-width="0.9" fill="none"/><circle cx="11.6" cy="3.6" r="1.4" fill="none" stroke="#e0e0e0" stroke-width="0.9"/><circle cx="11.6" cy="11.7" r="1.4" fill="none" stroke="#e0e0e0" stroke-width="0.9"/></svg>
<div class="sl" style="left:604.5px;top:410.7px;width:103px;height:14.6px;background:#545454"></div>
<div class="t" style="left:615.8px;top:410.0px;line-height:16px;color:#dcdcdc;font-size:9.2px;">Strength</div>
<div class="t" style="right:396.0px;top:410.0px;line-height:16px;color:#dcdcdc;font-size:9.2px;text-align:right;letter-spacing:0.4px;">1.200</div>
<svg class="ic" style="left:590px;top:411.8px" width="12" height="12"><circle cx="6" cy="6" r="4.0" fill="#a1a1a1" stroke="rgba(0,0,0,0.75)" stroke-width="1.2"/></svg>
<div class="t" style="left:605.5px;top:426.5px;line-height:16px;color:#dcdcdc;font-size:9.2px;">Color</div>
<svg class="ic" style="left:590px;top:428.5px" width="12" height="12"><circle cx="6" cy="6" r="4.0" fill="#c7c729" stroke="rgba(0,0,0,0.75)" stroke-width="1.2"/></svg>
<div class="node" style="left:622.2px;top:602.6px;width:120px;height:116.5px;box-shadow:0 0 0 1px rgba(0,0,0,0.3), 0 1px 7px rgba(0,0,0,0.5);"><div class="hdr" style="height:16px;background:#3c3c83"></div></div>
<svg class="ic" style="left:629.7px;top:608.0000000000001px" width="9" height="5.6"><path d="M1 1 L4.5 4.6 L8 1" fill="none" stroke="rgba(255,255,255,0.72)" stroke-width="1.0"/></svg>
<div class="t" style="left:643.2px;top:602.6px;line-height:16px;color:#e4e4e4;font-size:9.2px;text-shadow:0 1px 1px rgba(0,0,0,0.35);letter-spacing:0.1px;">Normal Map</div>
<div class="t" style="right:357.79999999999995px;top:622.2px;line-height:16px;color:#dcdcdc;font-size:9.2px;text-align:right;">Normal</div>
<svg class="ic" style="left:736.2px;top:624.2px" width="12" height="12"><circle cx="6" cy="6" r="4.0" fill="#6363c7" stroke="rgba(0,0,0,0.75)" stroke-width="1.2"/></svg>
<div class="dd" style="left:630.7px;top:644.6px;width:103px;height:15px;background:#282828;border-color:#3d3d3d"></div>
<div class="t" style="left:636.7px;top:644.1px;line-height:16px;color:#dcdcdc;font-size:9.2px;">Tangent Space</div>
<svg class="ic" style="left:724.85px;top:650.1px" width="7.3" height="5.0"><path d="M1 1 L3.65 4.0 L6.3 1" fill="none" stroke="#cfcfcf" stroke-width="1.0"/></svg>
<div class="dd" style="left:630.7px;top:664.6px;width:103px;height:14.5px;background:#1e1e1e;border-color:#333"></div>
<svg class="ic" style="left:633.2px;top:665.1px" width="14" height="14"><path d="M3 3.6 H6.2 V12.8 H3 Q1.2 12.8 1.2 11 V5.4 Q1.2 3.6 3 3.6 Z" fill="#e8e8e8"/><path d="M6.2 4.2 H10.2 M6.2 11.6 H10.2 M11.6 5 V10.3" stroke="#e0e0e0" stroke-width="0.9" fill="none"/><circle cx="11.6" cy="3.6" r="1.4" fill="none" stroke="#e0e0e0" stroke-width="0.9"/><circle cx="11.6" cy="11.7" r="1.4" fill="none" stroke="#e0e0e0" stroke-width="0.9"/></svg>
<div class="sl" style="left:630.7px;top:682.8000000000001px;width:103px;height:14.6px;background:#545454"></div>
<div class="t" style="left:642.0px;top:682.1px;line-height:16px;color:#dcdcdc;font-size:9.2px;">Strength</div>
<div class="t" style="right:369.79999999999995px;top:682.1px;line-height:16px;color:#dcdcdc;font-size:9.2px;text-align:right;letter-spacing:0.4px;">0.110</div>
<svg class="ic" style="left:616.2px;top:683.9px" width="12" height="12"><circle cx="6" cy="6" r="4.0" fill="#a1a1a1" stroke="rgba(0,0,0,0.75)" stroke-width="1.2"/></svg>
<div class="t" style="left:631.7px;top:698.6px;line-height:16px;color:#dcdcdc;font-size:9.2px;">Color</div>
<svg class="ic" style="left:616.2px;top:700.6px" width="12" height="12"><circle cx="6" cy="6" r="4.0" fill="#c7c729" stroke="rgba(0,0,0,0.75)" stroke-width="1.2"/></svg>
<div class="node" style="left:-3px;top:337px;width:112px;height:188.5px;box-shadow:0 0 0 1px rgba(0,0,0,0.3), 0 1px 7px rgba(0,0,0,0.5);"><div class="hdr" style="height:16px;background:#83314a"></div></div>
<svg class="ic" style="left:4.5px;top:342.4px" width="9" height="5.6"><path d="M1 1 L4.5 4.6 L8 1" fill="none" stroke="rgba(255,255,255,0.72)" stroke-width="1.0"/></svg>
<div class="t" style="left:18px;top:337.0px;line-height:16px;color:#e4e4e4;font-size:9.2px;text-shadow:0 1px 1px rgba(0,0,0,0.35);letter-spacing:0.1px;">Texture Coordinate</div>
<div class="t" style="right:991.5px;top:356.4px;line-height:16px;color:#dcdcdc;font-size:9.2px;text-align:right;">Generated</div>
<svg class="ic" style="left:103.2px;top:358.4px" width="12" height="12"><circle cx="6" cy="6" r="4.0" fill="#6363c7" stroke="rgba(0,0,0,0.75)" stroke-width="1.2"/></svg>
<div class="t" style="right:991.5px;top:374.08px;line-height:16px;color:#dcdcdc;font-size:9.2px;text-align:right;">Normal</div>
<svg class="ic" style="left:103.2px;top:376.08px" width="12" height="12"><circle cx="6" cy="6" r="4.0" fill="#6363c7" stroke="rgba(0,0,0,0.75)" stroke-width="1.2"/></svg>
<div class="t" style="right:991.5px;top:391.76px;line-height:16px;color:#dcdcdc;font-size:9.2px;text-align:right;">UV</div>
<svg class="ic" style="left:103.2px;top:393.76px" width="12" height="12"><circle cx="6" cy="6" r="4.0" fill="#6363c7" stroke="rgba(0,0,0,0.75)" stroke-width="1.2"/></svg>
<div class="t" style="right:991.5px;top:409.44px;line-height:16px;color:#dcdcdc;font-size:9.2px;text-align:right;">Object</div>
<svg class="ic" style="left:103.2px;top:411.44px" width="12" height="12"><circle cx="6" cy="6" r="4.0" fill="#6363c7" stroke="rgba(0,0,0,0.75)" stroke-width="1.2"/></svg>
<div class="t" style="right:991.5px;top:427.12px;line-height:16px;color:#dcdcdc;font-size:9.2px;text-align:right;">Camera</div>
<svg class="ic" style="left:103.2px;top:429.12px" width="12" height="12"><circle cx="6" cy="6" r="4.0" fill="#6363c7" stroke="rgba(0,0,0,0.75)" stroke-width="1.2"/></svg>
<div class="t" style="right:991.5px;top:444.79999999999995px;line-height:16px;color:#dcdcdc;font-size:9.2px;text-align:right;">Window</div>
<svg class="ic" style="left:103.2px;top:446.79999999999995px" width="12" height="12"><circle cx="6" cy="6" r="4.0" fill="#6363c7" stroke="rgba(0,0,0,0.75)" stroke-width="1.2"/></svg>
<div class="t" style="right:991.5px;top:462.47999999999996px;line-height:16px;color:#dcdcdc;font-size:9.2px;text-align:right;">Reflection</div>
<svg class="ic" style="left:103.2px;top:464.47999999999996px" width="12" height="12"><circle cx="6" cy="6" r="4.0" fill="#6363c7" stroke="rgba(0,0,0,0.75)" stroke-width="1.2"/></svg>
<div class="t" style="left:6px;top:483.8px;line-height:16px;color:#dcdcdc;font-size:9.2px;">Object:</div>
<div class="dd" style="left:37.8px;top:484.2px;width:62.8px;height:15.4px;background:#1f1f1f;border-color:#3a3a3a"></div>
<svg class="ic" style="left:40px;top:485px" width="14" height="14"><path d="M1.1 5 V1.3 H3.6 M10 1.3 H12.4 V5 M12.4 9 V12.7 H10 M3.6 12.7 H1.1 V9" fill="none" stroke="#9a9a9a" stroke-width="1.1"/><rect x="3.6" y="3.7" width="6.6" height="6.3" fill="#e6e6e6"/></svg>
<div class="t" style="left:57px;top:483.8px;line-height:16px;color:#777777;font-size:9.2px;">Object</div>
<svg class="ic" style="left:85px;top:485px" width="13" height="13"><path d="M1.6 11.6 L7.6 5.6" stroke="#a8a8a8" stroke-width="1.7"/><circle cx="9.9" cy="3.3" r="2.2" fill="#a8a8a8"/><path d="M6.2 4.3 L8.9 7" stroke="#a8a8a8" stroke-width="1.3"/></svg>
<div class="cb" style="left:6px;top:506.6px;width:10.5px;height:10.5px;background:#545454"></div>
<div class="t" style="left:19px;top:503.8px;line-height:16px;color:#dcdcdc;font-size:9.2px;">From Instancer</div>
<div class="node" style="left:159.3px;top:355px;width:111.5px;height:276.5px;box-shadow:0 0 0 1px rgba(0,0,0,0.3), 0 1px 7px rgba(0,0,0,0.5);"><div class="hdr" style="height:16px;background:#3c3c83"></div></div>
<svg class="ic" style="left:166.8px;top:360.4px" width="9" height="5.6"><path d="M1 1 L4.5 4.6 L8 1" fill="none" stroke="rgba(255,255,255,0.72)" stroke-width="1.0"/></svg>
<div class="t" style="left:180.3px;top:355.0px;line-height:16px;color:#e4e4e4;font-size:9.2px;text-shadow:0 1px 1px rgba(0,0,0,0.35);letter-spacing:0.1px;">Mapping</div>
<div class="t" style="right:830px;top:375.0px;line-height:16px;color:#dcdcdc;font-size:9.2px;text-align:right;">Vector</div>
<svg class="ic" style="left:265.2px;top:377px" width="12" height="12"><circle cx="6" cy="6" r="4.0" fill="#6363c7" stroke="rgba(0,0,0,0.75)" stroke-width="1.2"/></svg>
<div class="t" style="left:168px;top:397.0px;line-height:16px;color:#dcdcdc;font-size:9.2px;">Type:</div>
<div class="dd" style="left:199.6px;top:397.2px;width:63px;height:15.4px;background:#282828;border-color:#3d3d3d"></div>
<div class="t" style="left:205.6px;top:396.9px;line-height:16px;color:#dcdcdc;font-size:9.2px;">Point</div>
<svg class="ic" style="left:253.75000000000003px;top:402.9px" width="7.3" height="5.0"><path d="M1 1 L3.65 4.0 L6.3 1" fill="none" stroke="#cfcfcf" stroke-width="1.0"/></svg>
<div class="t" style="left:168px;top:414.8px;line-height:16px;color:#dcdcdc;font-size:9.2px;">Vector</div>
<svg class="ic" style="left:153.3px;top:416.8px" width="12" height="12"><circle cx="6" cy="6" r="4.0" fill="#6363c7" stroke="rgba(0,0,0,0.75)" stroke-width="1.2"/></svg>
<div class="t" style="left:168px;top:431.9px;line-height:16px;color:#dcdcdc;font-size:9.2px;">Location:</div>
<svg class="ic" style="left:153.3px;top:433.9px" width="12" height="12"><circle cx="6" cy="6" r="4.0" fill="#6363c7" stroke="rgba(0,0,0,0.75)" stroke-width="1.2"/></svg>
<div class="sl" style="left:167.7px;top:448.8px;width:94.7px;height:46.9px;background:#545454"></div>
<div style="left:167.7px;top:463.3px;width:94.7px;height:1px;background:#3a3a3a"></div>
<div style="left:167.7px;top:479.1px;width:94.7px;height:1px;background:#3a3a3a"></div>
<div class="t" style="left:179px;top:447.7px;line-height:16px;color:#dcdcdc;font-size:9.2px;">X</div>
<div class="t" style="right:840.5px;top:447.7px;line-height:16px;color:#dcdcdc;font-size:9.2px;text-align:right;">0 m</div>
<div class="t" style="left:179px;top:463.34999999999997px;line-height:16px;color:#dcdcdc;font-size:9.2px;">Y</div>
<div class="t" style="right:840.5px;top:463.34999999999997px;line-height:16px;color:#dcdcdc;font-size:9.2px;text-align:right;">0 m</div>
<div class="t" style="left:179px;top:479.0px;line-height:16px;color:#dcdcdc;font-size:9.2px;">Z</div>
<div class="t" style="right:840.5px;top:479.0px;line-height:16px;color:#dcdcdc;font-size:9.2px;text-align:right;">0 m</div>
<div class="t" style="left:168px;top:497.5px;line-height:16px;color:#dcdcdc;font-size:9.2px;">Rotation:</div>
<svg class="ic" style="left:153.3px;top:499.5px" width="12" height="12"><circle cx="6" cy="6" r="4.0" fill="#6363c7" stroke="rgba(0,0,0,0.75)" stroke-width="1.2"/></svg>
<div class="sl" style="left:167.7px;top:514.6px;width:94.7px;height:46.9px;background:#545454"></div>
<div style="left:167.7px;top:529.1px;width:94.7px;height:1px;background:#3a3a3a"></div>
<div style="left:167.7px;top:544.9000000000001px;width:94.7px;height:1px;background:#3a3a3a"></div>
<div class="t" style="left:179px;top:513.5px;line-height:16px;color:#dcdcdc;font-size:9.2px;">X</div>
<div class="t" style="right:840.5px;top:513.5px;line-height:16px;color:#dcdcdc;font-size:9.2px;text-align:right;">0°</div>
<div class="t" style="left:179px;top:529.15px;line-height:16px;color:#dcdcdc;font-size:9.2px;">Y</div>
<div class="t" style="right:840.5px;top:529.15px;line-height:16px;color:#dcdcdc;font-size:9.2px;text-align:right;">0°</div>
<div class="t" style="left:179px;top:544.8px;line-height:16px;color:#dcdcdc;font-size:9.2px;">Z</div>
<div class="t" style="right:840.5px;top:544.8px;line-height:16px;color:#dcdcdc;font-size:9.2px;text-align:right;">0°</div>
<div class="t" style="left:168px;top:563.3px;line-height:16px;color:#dcdcdc;font-size:9.2px;">Scale:</div>
<svg class="ic" style="left:153.3px;top:565.3px" width="12" height="12"><circle cx="6" cy="6" r="4.0" fill="#6363c7" stroke="rgba(0,0,0,0.75)" stroke-width="1.2"/></svg>
<div class="sl" style="left:167.7px;top:580.8px;width:94.7px;height:46.9px;background:#545454"></div>
<div style="left:167.7px;top:595.3px;width:94.7px;height:1px;background:#3a3a3a"></div>
<div style="left:167.7px;top:611.1px;width:94.7px;height:1px;background:#3a3a3a"></div>
<div class="t" style="left:179px;top:579.6999999999999px;line-height:16px;color:#dcdcdc;font-size:9.2px;">X</div>
<div class="t" style="right:840.5px;top:579.6999999999999px;line-height:16px;color:#dcdcdc;font-size:9.2px;text-align:right;letter-spacing:0.45px;">1.000</div>
<div class="t" style="left:179px;top:595.3499999999999px;line-height:16px;color:#dcdcdc;font-size:9.2px;">Y</div>
<div class="t" style="right:840.5px;top:595.3499999999999px;line-height:16px;color:#dcdcdc;font-size:9.2px;text-align:right;letter-spacing:0.45px;">1.000</div>
<div class="t" style="left:179px;top:610.9999999999999px;line-height:16px;color:#dcdcdc;font-size:9.2px;">Z</div>
<div class="t" style="right:840.5px;top:610.9999999999999px;line-height:16px;color:#dcdcdc;font-size:9.2px;text-align:right;letter-spacing:0.45px;">1.000</div>
<div class="node" style="left:992.2px;top:478.2px;width:110px;height:113.8px;box-shadow:0 0 0 1px rgba(0,0,0,0.3), 0 1px 7px rgba(0,0,0,0.5);"><div class="hdr" style="height:17px;background:#3f1b21"></div></div>
<div style="left:992.2px;top:478.2px;width:110px;height:113.8px;border:1.3px solid #d2d2d2;border-radius:5px"></div>
<svg class="ic" style="left:999.7px;top:484.09999999999997px" width="9" height="5.6"><path d="M1 1 L4.5 4.6 L8 1" fill="none" stroke="rgba(255,255,255,0.72)" stroke-width="1.0"/></svg>
<div class="t" style="left:1013.2px;top:478.7px;line-height:16px;color:#e4e4e4;font-size:9.2px;text-shadow:0 1px 1px rgba(0,0,0,0.35);letter-spacing:0.1px;">Material Output</div>
<div class="dd" style="left:1001.7px;top:500.1px;width:100px;height:15px;background:#282828;border-color:#3d3d3d"></div>
<div class="t" style="left:1007.7px;top:499.6px;line-height:16px;color:#dcdcdc;font-size:9.2px;">All</div>
<div class="t" style="left:1002px;top:518.2px;line-height:16px;color:#dcdcdc;font-size:9.2px;">Surface</div>
<svg class="ic" style="left:986.2px;top:520.2px" width="12" height="12"><circle cx="6" cy="6" r="4.0" fill="#63c763" stroke="rgba(0,0,0,0.75)" stroke-width="1.2"/></svg>
<div class="t" style="left:1002px;top:535.8px;line-height:16px;color:#dcdcdc;font-size:9.2px;">Volume</div>
<svg class="ic" style="left:986.2px;top:537.8px" width="12" height="12"><circle cx="6" cy="6" r="4.0" fill="#63c763" stroke="rgba(0,0,0,0.75)" stroke-width="1.2"/></svg>
<div class="t" style="left:1002px;top:553.1px;line-height:16px;color:#dcdcdc;font-size:9.2px;">Displacement</div>
<svg class="ic" style="left:986.2px;top:555.1px" width="12" height="12"><circle cx="6" cy="6" r="4.0" fill="#6363c7" stroke="rgba(0,0,0,0.75)" stroke-width="1.2"/></svg>
<div class="t" style="left:1002px;top:570.7px;line-height:16px;color:#dcdcdc;font-size:9.2px;">Thickness</div>
<svg class="ic" style="left:986.2px;top:572.7px" width="12" height="12"><circle cx="6" cy="6" r="4.0" fill="#a1a1a1" stroke="rgba(0,0,0,0.75)" stroke-width="1.2"/></svg>
<div style="left:-5px;top:906px;width:1092px;height:3.2px;border-radius:2px;background:rgba(255,255,255,0.11)"></div>
<div style="left:0;top:909.3px;width:1091px;height:5px;background:#181818"></div>
</div></body></html>
